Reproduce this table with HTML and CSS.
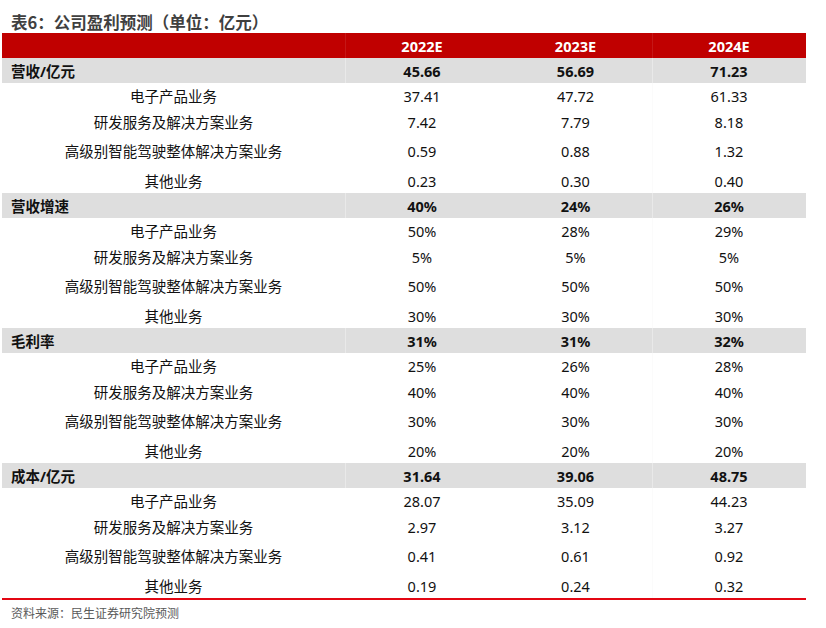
FILE: index.html
```html
<!DOCTYPE html>
<html lang="zh">
<head>
<meta charset="utf-8">
<title>表6：公司盈利预测</title>
<link rel="stylesheet" href="styles.css">
</head>
<body>
<div class="title">表6：公司盈利预测（单位：亿元）</div>
<table class="fc">
  <colgroup>
    <col class="c1"><col class="c2"><col class="c3"><col class="c4">
  </colgroup>
  <thead>
    <tr class="hd"><th></th><th class="dv">2022E</th><th>2023E</th><th class="dv">2024E</th></tr>
  </thead>
  <tbody>
    <tr class="grp"><td class="gl">营收/亿元</td><td class="dv">45.66</td><td>56.69</td><td class="dv">71.23</td></tr>
    <tr class="r1"><td>电子产品业务</td><td>37.41</td><td>47.72</td><td class="dvl">61.33</td></tr>
    <tr class="r2"><td>研发服务及解决方案业务</td><td>7.42</td><td>7.79</td><td class="dvl">8.18</td></tr>
    <tr class="r3"><td>高级别智能驾驶整体解决方案业务</td><td>0.59</td><td>0.88</td><td class="dvl">1.32</td></tr>
    <tr class="r4"><td>其他业务</td><td>0.23</td><td>0.30</td><td class="dvl">0.40</td></tr>

    <tr class="grp"><td class="gl">营收增速</td><td class="dv">40%</td><td>24%</td><td class="dv">26%</td></tr>
    <tr class="r1"><td>电子产品业务</td><td>50%</td><td>28%</td><td class="dvl">29%</td></tr>
    <tr class="r2"><td>研发服务及解决方案业务</td><td>5%</td><td>5%</td><td class="dvl">5%</td></tr>
    <tr class="r3"><td>高级别智能驾驶整体解决方案业务</td><td>50%</td><td>50%</td><td class="dvl">50%</td></tr>
    <tr class="r4"><td>其他业务</td><td>30%</td><td>30%</td><td class="dvl">30%</td></tr>

    <tr class="grp"><td class="gl">毛利率</td><td class="dv">31%</td><td>31%</td><td class="dv">32%</td></tr>
    <tr class="r1"><td>电子产品业务</td><td>25%</td><td>26%</td><td class="dvl">28%</td></tr>
    <tr class="r2"><td>研发服务及解决方案业务</td><td>40%</td><td>40%</td><td class="dvl">40%</td></tr>
    <tr class="r3"><td>高级别智能驾驶整体解决方案业务</td><td>30%</td><td>30%</td><td class="dvl">30%</td></tr>
    <tr class="r4"><td>其他业务</td><td>20%</td><td>20%</td><td class="dvl">20%</td></tr>

    <tr class="grp"><td class="gl">成本/亿元</td><td class="dv">31.64</td><td>39.06</td><td class="dv">48.75</td></tr>
    <tr class="r1"><td>电子产品业务</td><td>28.07</td><td>35.09</td><td class="dvl">44.23</td></tr>
    <tr class="r2"><td>研发服务及解决方案业务</td><td>2.97</td><td>3.12</td><td class="dvl">3.27</td></tr>
    <tr class="r3"><td>高级别智能驾驶整体解决方案业务</td><td>0.41</td><td>0.61</td><td class="dvl">0.92</td></tr>
    <tr class="r4"><td>其他业务</td><td>0.19</td><td>0.24</td><td class="dvl">0.32</td></tr>
  </tbody>
</table>
<div class="src">资料来源：民生证券研究院预测</div>
</body>
</html>
```

FILE: styles.css
```css
html, body {
  margin: 0;
  padding: 0;
  background: #ffffff;
}

body {
  width: 826px;
  height: 628px;
  overflow: hidden;
  font-family: "Noto Sans", "Noto Sans CJK SC", sans-serif;
  color: #111111;
}

.title {
  padding: 12px 0 0 11px;
  height: 21px;
  line-height: 21px;
  font-size: 16.5px;
  font-weight: 700;
  color: #404040;
  font-family: "Noto Sans CJK SC", sans-serif;
  white-space: nowrap;
}

.fc {
  margin-left: 2px;
  width: 804px;
  table-layout: fixed;
  border-collapse: collapse;
  border-spacing: 0;
  font-size: 14.5px;
  border-bottom: 2px solid #e30613;
}

.c1 { width: 343px; }
.c2 { width: 154px; }
.c3 { width: 153px; }
.c4 { width: 154px; }

.fc th,
.fc td {
  padding: 0;
  text-align: center;
  vertical-align: middle;
  line-height: 18px;
  white-space: nowrap;
}

.hd th {
  height: 25px;
  background: #c00000;
  color: #ffffff;
  font-weight: 700;
}

.hd th.dv {
  box-shadow: inset 1px 0 0 rgba(255, 255, 255, 0.09);
}

.grp td {
  height: 25px;
  background: #dedede;
  font-weight: 700;
  color: #111111;
}

.grp td.dv {
  box-shadow: inset 1px 0 0 rgba(255, 255, 255, 0.35);
}

.grp td.gl {
  text-align: left;
  padding-left: 9px;
}

.r1 td { height: 26px; }
.r2 td { height: 25px; }
.r3 td { height: 34px; }
.r4 td { height: 25px; }

td.dvl {
  box-shadow: inset 1px 0 0 rgba(0, 0, 0, 0.015);
}

.src {
  margin-top: 5px;
  padding-left: 11px;
  font-size: 12px;
  line-height: 16px;
  color: #595959;
  font-family: "Noto Sans CJK SC", sans-serif;
}
```
